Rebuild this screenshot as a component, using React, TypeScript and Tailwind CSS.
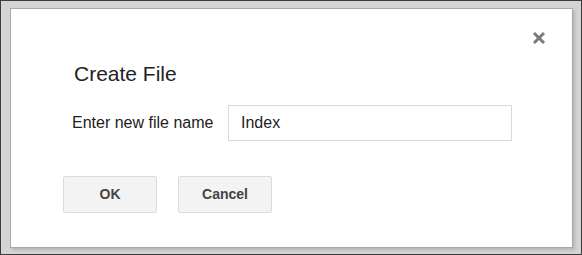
export default function App() {
  return (
    <div
      className="flex h-[255px] w-[582px] border border-[#3c3c3c] bg-[#d4d4d4] pb-[6px] pl-[9px] pr-[8px] pt-[7px]"
      style={{ fontFamily: '"Liberation Sans", Arial, sans-serif' }}
    >
      <div className="relative flex-1 border border-[#a8a8a8] bg-white shadow-[2px_2px_3px_rgba(0,0,0,0.15)]">
        <button
          type="button"
          className="absolute right-[25px] top-[21px] flex h-[16px] w-[16px] items-center justify-center"
        >
          <svg width="14" height="14" viewBox="0 0 14 14">
            <path d="M2 2 L12 12 M12 2 L2 12" stroke="#7a7a7a" strokeWidth="3" />
          </svg>
        </button>

        <div className="pl-[63px] pt-[53px] text-[21px] leading-[24px] text-[#222]">Create File</div>

        <div className="mt-[19px] flex items-center pl-[61px]">
          <label className="w-[156px] text-[16px] text-[#222]">Enter new file name</label>
          <input
            defaultValue="Index"
            className="h-[36px] w-[284px] border border-[#d9d9d9] px-[12px] text-[16px] text-[#222] outline-none"
          />
        </div>

        <div className="mt-[35px] flex gap-[21px] pl-[52px]">
          <button
            type="button"
            className="h-[37px] w-[94px] rounded-[2px] border border-[#dcdcdc] bg-[#f3f3f3] text-[14px] font-bold text-[#444]"
          >
            OK
          </button>
          <button
            type="button"
            className="h-[37px] w-[94px] rounded-[2px] border border-[#dcdcdc] bg-[#f3f3f3] text-[14px] font-bold text-[#444]"
          >
            Cancel
          </button>
        </div>
      </div>
    </div>
  );
}
